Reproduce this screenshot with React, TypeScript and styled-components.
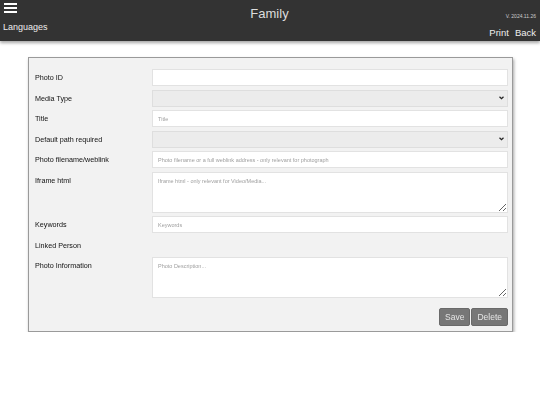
import React from 'react';
import styled, { createGlobalStyle } from 'styled-components';

const GlobalStyle = createGlobalStyle`
  html, body {
    margin: 0;
    padding: 0;
    background: #ffffff;
    font-family: "Liberation Sans", Arial, sans-serif;
  }
  * { box-sizing: border-box; }
`;

const Header = styled.header`
  height: 41px;
  background: #333333;
  color: #ffffff;
  display: flex;
  justify-content: space-between;
  padding: 0 4px 0 3px;
  box-shadow: 0 2px 3px rgba(0, 0, 0, 0.35);
  position: relative;
`;

const HeaderSide = styled.div<{ $align: 'left' | 'right' }>`
  display: flex;
  flex-direction: column;
  align-items: ${(p) => (p.$align === 'left' ? 'flex-start' : 'flex-end')};
  width: 120px;
`;

const Burger = styled.div`
  margin-top: 3px;
  width: 13px;
  display: flex;
  flex-direction: column;
  gap: 2px;
  margin-left: 1px;
  span {
    display: block;
    height: 2px;
    background: #ffffff;
  }
`;

const HeaderLink = styled.span`
  font-size: 9px;
  color: #eeeeee;
  margin-top: 9px;
`;

const Title = styled.div`
  font-size: 13px;
  color: #dddddd;
  padding-top: 6px;
`;

const Version = styled.div`
  font-size: 5px;
  color: #cccccc;
  margin-top: 13px;
`;

const NavLinks = styled.div`
  display: flex;
  gap: 6px;
  font-size: 9.5px;
  color: #eeeeee;
  margin-top: 8px;
`;

const Card = styled.div`
  width: 485px;
  margin: 16px auto 0;
  background: #f2f2f2;
  border: 1px solid #9a9a9a;
  box-shadow: 1px 2px 3px rgba(0, 0, 0, 0.35);
  padding: 11px 4px 5px 6px;
  will-change: transform;
`;

const Form = styled.div`
  display: grid;
  grid-template-columns: 117px 1fr;
  row-gap: 3.5px;
  align-items: start;
`;

const Label = styled.label`
  font-size: 7.2px;
  color: #111111;
  line-height: 17px;
`;

const Field = styled.input`
  height: 17px;
  width: 100%;
  border: 1px solid #e2e2e2;
  background: #ffffff;
  font-family: inherit;
  font-size: 5.5px;
  padding: 0 5px;
  color: #333;
  outline: none;
  &::placeholder { color: #a0a0a0; }
`;

const SelectBox = styled.div`
  height: 17px;
  width: 100%;
  border: 1px solid #dedede;
  background: #ececec;
  display: flex;
  justify-content: flex-end;
  align-items: center;
  padding-right: 3px;
`;

const Area = styled.textarea`
  height: 41px;
  width: 100%;
  border: 1px solid #e2e2e2;
  background: #ffffff;
  font-family: inherit;
  font-size: 5.5px;
  padding: 5px 5px;
  resize: vertical;
  outline: none;
  &::placeholder { color: #a0a0a0; }
`;

const Empty = styled.div`
  height: 17px;
`;

const Actions = styled.div`
  display: flex;
  justify-content: flex-end;
  gap: 1px;
  margin-top: 10px;
`;

const Button = styled.button`
  height: 18px;
  background: #777777;
  color: #e6e6e6;
  border: 1px solid #6a6a6a;
  border-radius: 2px;
  font-family: inherit;
  font-size: 8.5px;
  padding: 0 5px;
`;

const Chevron = () => (
  <svg width="5" height="4" viewBox="0 0 10 8">
    <path d="M1 1.5 L5 5.5 L9 1.5" stroke="#222" strokeWidth="2.4" fill="none" />
  </svg>
);

export default function App() {
  return (
    <>
      <GlobalStyle />
      <Header>
        <HeaderSide $align="left">
          <Burger>
            <span />
            <span />
            <span />
          </Burger>
          <HeaderLink>Languages</HeaderLink>
        </HeaderSide>
        <Title>Family</Title>
        <HeaderSide $align="right">
          <Version>V. 2024.11.26</Version>
          <NavLinks>
            <span>Print</span>
            <span>Back</span>
          </NavLinks>
        </HeaderSide>
      </Header>
      <Card>
        <Form>
          <Label>Photo ID</Label>
          <Field />
          <Label>Media Type</Label>
          <SelectBox><Chevron /></SelectBox>
          <Label>Title</Label>
          <Field placeholder="Title" />
          <Label>Default path required</Label>
          <SelectBox><Chevron /></SelectBox>
          <Label>Photo filename/weblink</Label>
          <Field placeholder="Photo filename or a full weblink address - only relevant for photograph" />
          <Label>Iframe html</Label>
          <Area placeholder="Iframe html - only relevant for Video/Media..." />
          <Label>Keywords</Label>
          <Field placeholder="Keywords" />
          <Label>Linked Person</Label>
          <Empty />
          <Label>Photo Information</Label>
          <Area placeholder="Photo Description..." />
        </Form>
        <Actions>
          <Button>Save</Button>
          <Button>Delete</Button>
        </Actions>
      </Card>
    </>
  );
}
